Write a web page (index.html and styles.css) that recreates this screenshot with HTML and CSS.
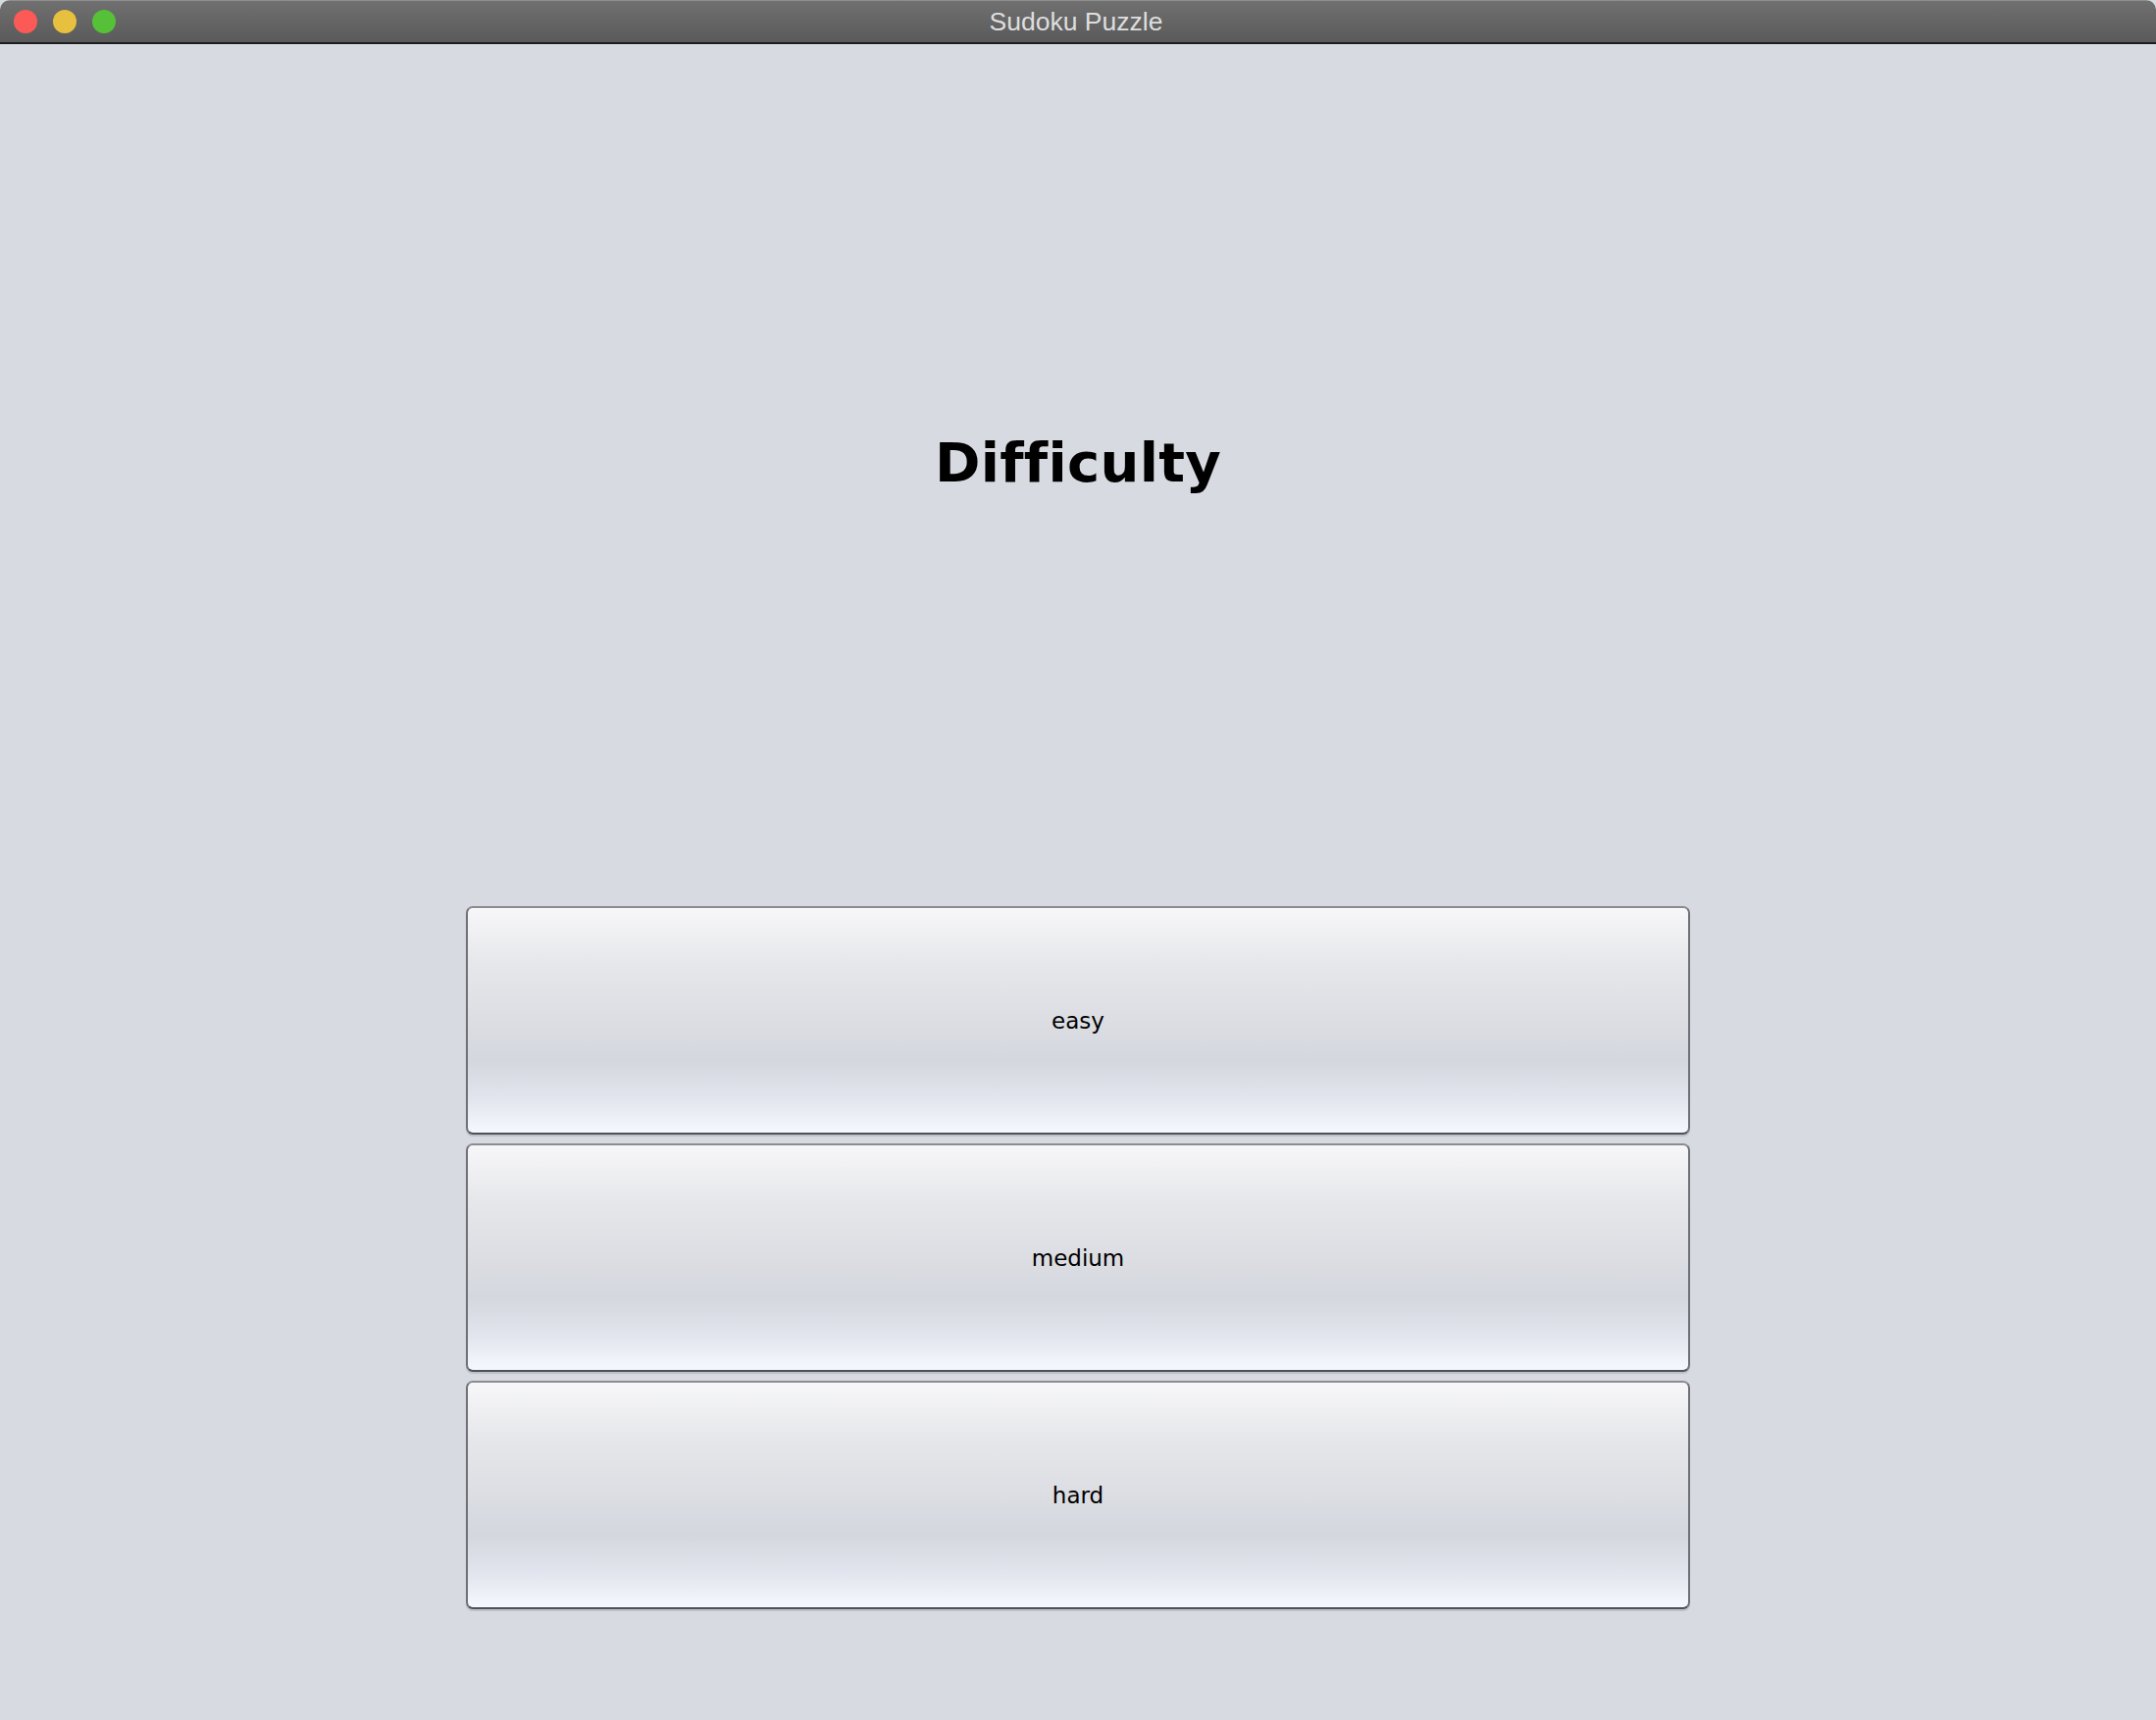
FILE: index.html
```html
<!DOCTYPE html>
<html>
<head>
<meta charset="utf-8">
<title>Sudoku Puzzle</title>
<link rel="stylesheet" href="styles.css">
</head>
<body>
<div class="window">
  <div class="titlebar">
    <div class="lights">
      <span class="light red"></span>
      <span class="light yellow"></span>
      <span class="light green"></span>
    </div>
    <div class="title">Sudoku Puzzle</div>
  </div>
  <div class="content">
    <div class="header">
      <h1 class="heading">Difficulty</h1>
    </div>
    <div class="buttons">
      <button class="btn">easy</button>
      <button class="btn">medium</button>
      <button class="btn">hard</button>
    </div>
  </div>
</div>
</body>
</html>
```
FILE: styles.css
```css
html, body {
  margin: 0;
  padding: 0;
  background: #d7dae1;
}
.window {
  width: 2198px;
  height: 1754px;
  display: flex;
  flex-direction: column;
  background: #d7dae1;
  border-radius: 10px 10px 0 0;
  overflow: hidden;
}
.titlebar {
  position: relative;
  height: 42px;
  flex: none;
  background: linear-gradient(#707070, #5a5a5a);
  border-top: 1px solid #8e8e8e;
  border-bottom: 2px solid #1e1e1e;
  display: flex;
  align-items: center;
  justify-content: center;
}
.lights {
  position: absolute;
  left: 14px;
  top: 9px;
  display: flex;
  gap: 16px;
}
.light {
  width: 24px;
  height: 24px;
  border-radius: 50%;
  display: block;
}
.red { background: #fc5a57; }
.yellow { background: #e6c03e; }
.green { background: #56c038; }
.title {
  font-family: "Liberation Sans", Arial, sans-serif;
  font-size: 26.5px;
  color: #dedede;
  padding-right: 4px;
}
.content {
  flex: 1;
  display: flex;
  flex-direction: column;
  align-items: center;
}
.header {
  height: 879px;
  width: 100%;
  display: flex;
  justify-content: center;
  align-items: flex-start;
}
.heading {
  margin: 0;
  margin-top: 392px;
  font-family: "DejaVu Sans", sans-serif;
  font-weight: bold;
  font-size: 56px;
  letter-spacing: 0.3px;
  line-height: 70px;
  color: #000;
}
.buttons {
  display: flex;
  flex-direction: column;
  gap: 9px;
  width: 1248px;
}
.btn {
  height: 233px;
  width: 100%;
  font-family: "DejaVu Sans", sans-serif;
  font-size: 23px;
  color: #000;
  border: 2px solid #8a8c92;
  border-bottom-color: #4f5156;
  border-left-color: #6f7176;
  border-right-color: #6f7176;
  border-radius: 7px;
  background: linear-gradient(#f7f7f9 0%, #e6e7ea 25%, #d4d7de 68%, #e2e5ed 85%, #f5f8fe 100%);
  box-shadow: 0 2px 1px rgba(0,0,0,0.12);
  padding: 0;
}
```
